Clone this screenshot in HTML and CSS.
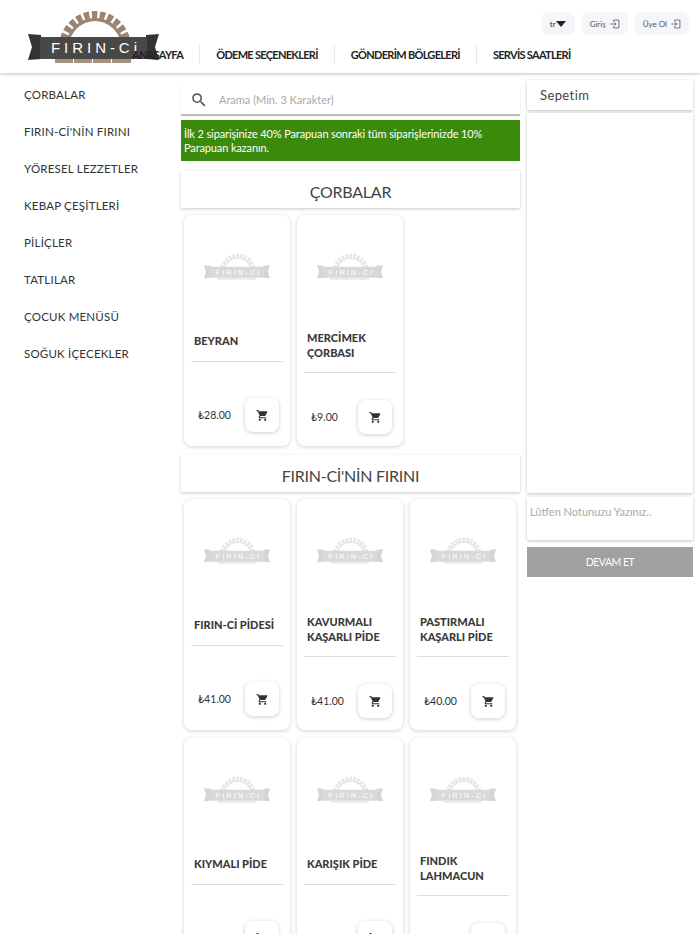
FILE: index.html
```html
<!DOCTYPE html>
<html lang="tr">
<head>
<meta charset="utf-8">
<title>FIRIN-Ci</title>
<link rel="stylesheet" href="styles.css">
</head>
<body>
<svg class="defs" aria-hidden="true">
  <symbol id="logo" viewBox="0 0 131 53">
    <path class="logo-arch" d="M36 37A31 31 0 0 1 98 37"/>
    <path class="logo-arch-core" d="M39.500 37A27.500 27.500 0 0 1 94.500 37"/>
    <path class="logo-brick" d="M27 49h18v4H27zM46 49h18v4H46zM65 49h18v4H65zM84 49h19v4H84z"/>
    <path class="logo-tail" d="M0 24l13 1v24l-13 1 4-13z"/>
    <path class="logo-tail" d="M131 24l-13 1v24l13 1-4-13z"/>
    <path class="logo-band" d="M12 27h107v22H12z"/>
    <text class="logo-text" x="23" y="43" textLength="86">FIRIN-Ci</text>
  </symbol>
  <symbol id="cart" viewBox="0 0 24 24">
    <path d="M7 18c-1.100 0-1.990.900-1.990 2S5.900 22 7 22s2-.900 2-2-.900-2-2-2zM1 2v2h2l3.600 7.590-1.350 2.450c-.160.280-.250.610-.250.960 0 1.100.900 2 2 2h12v-2H7.420c-.140 0-.250-.110-.250-.250l.030-.120.900-1.630h7.450c.750 0 1.410-.410 1.750-1.030l3.580-6.490c.080-.140.120-.310.120-.480 0-.550-.450-1-1-1H5.210l-.940-2H1zm16 16c-1.100 0-1.990.900-1.990 2s.890 2 1.990 2 2-.900 2-2-.900-2-2-2z"/>
    <path d="M6 6h14l-3 6H8z"/>
  </symbol>
  <symbol id="login" viewBox="0 0 14 14">
    <path d="M5 1.500h7.500v11H5M5 1.500v2.500M5 12.500V10M.5 7h8M6 4.500 8.500 7 6 9.500" fill="none" stroke="currentColor" stroke-width="1.100"/>
  </symbol>
</svg>

<header class="site-header">
  <svg class="logo"><use href="#logo"/></svg>
  <div class="top-actions">
    <button class="chip chip-lang">tr<span class="caret"></span></button>
    <button class="chip">Giriş <svg class="chip-icon"><use href="#login"/></svg></button>
    <button class="chip">Üye Ol <svg class="chip-icon"><use href="#login"/></svg></button>
  </div>
  <nav class="main-nav">
    <a class="nav-link">ANASAYFA</a>
    <a class="nav-link">ÖDEME SEÇENEKLERİ</a>
    <a class="nav-link">GÖNDERİM BÖLGELERİ</a>
    <a class="nav-link">SERVİS SAATLERİ</a>
  </nav>
</header>

<div class="page">
  <aside class="categories">
    <a class="category">ÇORBALAR</a>
    <a class="category">FIRIN-Cİ'NİN FIRINI</a>
    <a class="category">YÖRESEL LEZZETLER</a>
    <a class="category">KEBAP ÇEŞİTLERİ</a>
    <a class="category">PİLİÇLER</a>
    <a class="category">TATLILAR</a>
    <a class="category">ÇOCUK MENÜSÜ</a>
    <a class="category">SOĞUK İÇECEKLER</a>
  </aside>

  <main class="content">
    <div class="search">
      <svg class="search-icon" viewBox="0 0 24 24"><path d="M15.500 14h-.790l-.280-.270A6.470 6.470 0 0 0 16 9.500 6.500 6.500 0 1 0 9.500 16c1.610 0 3.090-.590 4.230-1.570l.270.280v.790l5 4.990L20.490 19l-4.990-5zm-6 0C7.010 14 5 11.990 5 9.500S7.010 5 9.500 5 14 7.010 14 9.500 11.990 14 9.500 14z"/></svg>
      <input class="search-input" placeholder="Arama (Min. 3 Karakter)">
    </div>
    <p class="promo">İlk 2 siparişinize 40% Parapuan sonraki tüm siparişlerinizde 10% Parapuan kazanın.</p>

    <h2 class="section-title">ÇORBALAR</h2>
    <div class="products">
      <article class="card">
        <div class="card-image"><svg class="watermark"><use href="#logo"/></svg></div>
        <h3 class="card-title">BEYRAN</h3>
        <div class="card-foot"><span class="price">₺28.00</span><button class="add"><svg class="add-icon"><use href="#cart"/></svg></button></div>
      </article>
      <article class="card">
        <div class="card-image"><svg class="watermark"><use href="#logo"/></svg></div>
        <h3 class="card-title card-title-long">MERCİMEK ÇORBASI</h3>
        <div class="card-foot card-foot-low"><span class="price">₺9.00</span><button class="add"><svg class="add-icon"><use href="#cart"/></svg></button></div>
      </article>
    </div>

    <h2 class="section-title">FIRIN-Cİ'NİN FIRINI</h2>
    <div class="products">
      <article class="card">
        <div class="card-image"><svg class="watermark"><use href="#logo"/></svg></div>
        <h3 class="card-title">FIRIN-Cİ PİDESİ</h3>
        <div class="card-foot"><span class="price">₺41.00</span><button class="add"><svg class="add-icon"><use href="#cart"/></svg></button></div>
      </article>
      <article class="card">
        <div class="card-image"><svg class="watermark"><use href="#logo"/></svg></div>
        <h3 class="card-title card-title-long">KAVURMALI KAŞARLI PİDE</h3>
        <div class="card-foot card-foot-low"><span class="price">₺41.00</span><button class="add"><svg class="add-icon"><use href="#cart"/></svg></button></div>
      </article>
      <article class="card">
        <div class="card-image"><svg class="watermark"><use href="#logo"/></svg></div>
        <h3 class="card-title card-title-long">PASTIRMALI KAŞARLI PİDE</h3>
        <div class="card-foot card-foot-low"><span class="price">₺40.00</span><button class="add"><svg class="add-icon"><use href="#cart"/></svg></button></div>
      </article>
      <article class="card">
        <div class="card-image"><svg class="watermark"><use href="#logo"/></svg></div>
        <h3 class="card-title">KIYMALI PİDE</h3>
        <div class="card-foot"><span class="price">₺41.00</span><button class="add"><svg class="add-icon"><use href="#cart"/></svg></button></div>
      </article>
      <article class="card">
        <div class="card-image"><svg class="watermark"><use href="#logo"/></svg></div>
        <h3 class="card-title">KARIŞIK PİDE</h3>
        <div class="card-foot"><span class="price">₺41.00</span><button class="add"><svg class="add-icon"><use href="#cart"/></svg></button></div>
      </article>
      <article class="card">
        <div class="card-image"><svg class="watermark"><use href="#logo"/></svg></div>
        <h3 class="card-title card-title-long">FINDIK LAHMACUN</h3>
        <div class="card-foot card-foot-low"><span class="price">₺40.00</span><button class="add"><svg class="add-icon"><use href="#cart"/></svg></button></div>
      </article>
    </div>
  </main>

  <aside class="basket">
    <div class="basket-title">Sepetim</div>
    <div class="basket-body"></div>
    <textarea class="basket-note" placeholder="Lütfen Notunuzu Yazınız.."></textarea>
    <button class="basket-submit">DEVAM ET</button>
  </aside>
</div>
</body>
</html>
```

FILE: styles.css
```css
* { box-sizing: border-box; }
html, body { height: 100%; }
body {
  margin: 0;
  overflow: hidden;
  background: #fff;
  color: #333;
  font-family: Lato, "Noto Sans", sans-serif;
}
.defs { display: none; }
button, input, textarea { font-family: inherit; border: 0; outline: 0; }

.site-header {
  position: relative;
  height: 73px;
  padding: 12px 11px 0 0;
  display: flex;
  flex-direction: column;
  background: #fff;
  box-shadow: 0 1px 3px rgba(0, 0, 0, .25);
}
.logo { position: absolute; left: 28px; top: 10px; width: 131px; height: 53px; }
.logo-arch { fill: none; stroke: #9b8572; stroke-width: 10; stroke-dasharray: 5.200 2.400; }
.logo-arch-core { fill: none; stroke: #9b8572; stroke-width: 3; }
.logo-brick { fill: #a8917c; }
.logo-tail { fill: #333; }
.logo-band { fill: #484848; }
.logo-text { fill: #fff; font: 15px "Liberation Sans", sans-serif; }

.top-actions { display: flex; justify-content: flex-end; gap: 7px; }
.chip {
  height: 23px;
  padding: 0 8px;
  display: flex;
  align-items: center;
  gap: 4px;
  background: #f5f6fa;
  border-radius: 7px;
  color: #555;
  font-size: 8px;
}
.chip-lang { gap: 0; padding-right: 9px; color: #333; }
.chip-icon { width: 10px; height: 10px; }
.caret {
  width: 0;
  height: 0;
  border: 5px solid transparent;
  border-top: 6px solid #222;
  border-bottom: 0;
}
.main-nav { position: relative; display: flex; margin: 10px 0 0 116px; }
.nav-link {
  height: 19px;
  padding: 0 16px;
  border-right: 1px solid #e8e8e8;
  color: #222;
  font-size: 11px;
  font-weight: 700;
  letter-spacing: -.7px;
  line-height: 19px;
  white-space: nowrap;
}
.nav-link:last-child { border-right: 0; }

.page { display: flex; height: calc(100% - 73px); overflow: hidden; }
.categories { flex: 0 0 181px; padding: 3px 0 0 24px; display: flex; flex-direction: column; }
.category {
  height: 37px;
  color: #333;
  font-size: 11.500px;
  letter-spacing: .2px;
  line-height: 37px;
  white-space: nowrap;
}

.content { flex: 0 0 339px; padding-top: 12px; }
.search {
  height: 29px;
  padding-left: 11px;
  display: flex;
  align-items: center;
  gap: 11px;
  background: #fff;
  box-shadow: 0 2px 1px rgba(0, 0, 0, .25);
}
.search-icon { width: 14px; height: 14px; fill: #555; flex: none; transform: scale(1.300); }
.search-input { flex: 1; font-size: 11px; min-width: 0; background: transparent; }
.search-input::placeholder, .basket-note::placeholder { color: #aaa; opacity: 1; }
.promo {
  margin: 6px 0 10px;
  height: 41px;
  padding: 7px 3px;
  background: #3b8a0c;
  color: #fff;
  font-size: 11px;
  letter-spacing: -.12px;
  line-height: 14px;
}
.section-title {
  margin: 0;
  height: 37px;
  background: #fff;
  box-shadow: 0 1px 3px rgba(0, 0, 0, .22);
  color: #444;
  font-size: 16px;
  font-weight: 400;
  letter-spacing: -.25px;
  line-height: 41px;
  text-align: center;
}
.products {
  margin: 7px 0 9px;
  padding: 0 3px;
  display: grid;
  grid-template-columns: repeat(3, 106px);
  gap: 8px 7px;
}
.card {
  height: 231px;
  padding: 0 7px;
  display: flex;
  flex-direction: column;
  background: #fff;
  border-radius: 8px;
  box-shadow: 0 1px 4px rgba(0, 0, 0, .18);
}
.card-image { height: 103px; display: flex; justify-content: center; align-items: center; }
.watermark { width: 66px; height: 27px; opacity: .2; }
.card-title {
  margin: 15px 0 0;
  padding: 0 3px 13px;
  border-bottom: 1px solid #ddd;
  color: #3a3a3a;
  font-size: 11px;
  font-weight: 900;
  line-height: 15px;
}
.card-title-long { margin-top: 12px; padding-bottom: 12px; }
.card-foot {
  margin-top: auto;
  padding: 0 4px 14px 7px;
  display: flex;
  justify-content: space-between;
  align-items: center;
}
.card-foot-low { padding-bottom: 12px; }
.price { color: #333; font-size: 10.500px; }
.add {
  width: 34px;
  height: 34px;
  padding: 0;
  display: flex;
  justify-content: center;
  align-items: center;
  background: #fff;
  border-radius: 8px;
  box-shadow: 0 1px 4px rgba(0, 0, 0, .2);
}
.add-icon { width: 13px; height: 13px; fill: #333; }

.basket { flex: 0 0 166px; margin-left: 7px; padding-top: 7px; display: flex; flex-direction: column; }
.basket-title {
  height: 30px;
  padding-left: 13px;
  background: #fff;
  box-shadow: 0 1px 3px rgba(0, 0, 0, .25);
  color: #444;
  font-size: 13px;
  letter-spacing: .4px;
  line-height: 30px;
}
.basket-body {
  height: 380px;
  margin-top: 3px;
  background: #fff;
  box-shadow: 0 1px 3px rgba(0, 0, 0, .25);
}
.basket-note {
  height: 43px;
  margin-top: 4px;
  padding: 8px 3px;
  display: block;
  resize: none;
  background: #fff;
  box-shadow: 0 1px 3px rgba(0, 0, 0, .25);
  font-size: 11px;
}
.basket-submit {
  height: 30px;
  margin-top: 7px;
  background: #a0a0a0;
  color: #fff;
  font-size: 10.500px;
  letter-spacing: -.5px;
}
```
